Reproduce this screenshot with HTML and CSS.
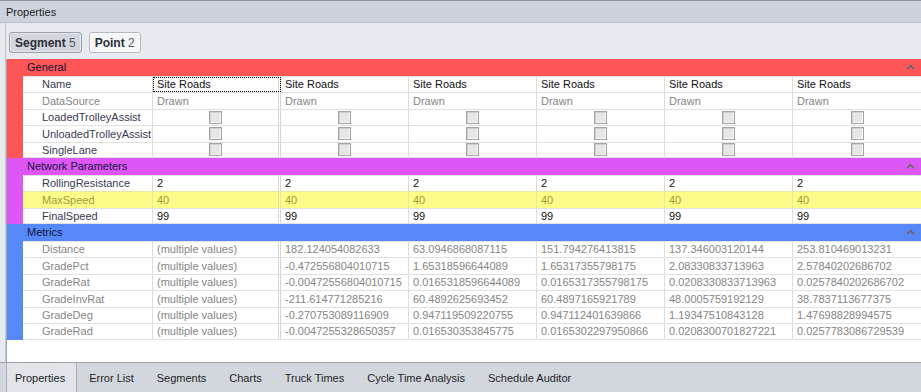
FILE: index.html
```html
<!DOCTYPE html>
<html lang="en">
<head>
    <meta charset="UTF-8">
    <title>Properties</title>
    <link rel="stylesheet" href="styles.css">
</head>
<body>
<div class="title-bar">Properties</div>
<div class="content">
    <div class="toolbar">
        <button class="sel-btn active"><b>Segment</b> 5</button>
        <button class="sel-btn"><b>Point</b> 2</button>
    </div>
    <div class="panel">
        <div class="cat cat-general">
            <div class="cat-head"><span>General</span><svg class="caret" width="9" height="6" viewBox="0 0 9 6"><path d="M1 5.2 L4.5 1.6 L8 5.2"/></svg></div>
            <div class="prow">
                <div class="pname">Name</div>
                <div class="pval focus">Site Roads</div>
                <div class="pval">Site Roads</div>
                <div class="pval">Site Roads</div>
                <div class="pval">Site Roads</div>
                <div class="pval">Site Roads</div>
                <div class="pval">Site Roads</div>
            </div>
            <div class="prow muted">
                <div class="pname">DataSource</div>
                <div class="pval">Drawn</div>
                <div class="pval">Drawn</div>
                <div class="pval">Drawn</div>
                <div class="pval">Drawn</div>
                <div class="pval">Drawn</div>
                <div class="pval">Drawn</div>
            </div>
            <div class="prow">
                <div class="pname">LoadedTrolleyAssist</div>
                <div class="pval check"><span class="box"></span></div>
                <div class="pval check"><span class="box"></span></div>
                <div class="pval check"><span class="box"></span></div>
                <div class="pval check"><span class="box"></span></div>
                <div class="pval check"><span class="box"></span></div>
                <div class="pval check"><span class="box"></span></div>
            </div>
            <div class="prow">
                <div class="pname">UnloadedTrolleyAssist</div>
                <div class="pval check"><span class="box"></span></div>
                <div class="pval check"><span class="box"></span></div>
                <div class="pval check"><span class="box"></span></div>
                <div class="pval check"><span class="box"></span></div>
                <div class="pval check"><span class="box"></span></div>
                <div class="pval check"><span class="box"></span></div>
            </div>
            <div class="prow">
                <div class="pname">SingleLane</div>
                <div class="pval check"><span class="box"></span></div>
                <div class="pval check"><span class="box"></span></div>
                <div class="pval check"><span class="box"></span></div>
                <div class="pval check"><span class="box"></span></div>
                <div class="pval check"><span class="box"></span></div>
                <div class="pval check"><span class="box"></span></div>
            </div>
        </div>

        <div class="cat cat-network">
            <div class="cat-head"><span>Network Parameters</span><svg class="caret" width="9" height="6" viewBox="0 0 9 6"><path d="M1 5.2 L4.5 1.6 L8 5.2"/></svg></div>
            <div class="prow">
                <div class="pname">RollingResistance</div>
                <div class="pval">2</div>
                <div class="pval">2</div>
                <div class="pval">2</div>
                <div class="pval">2</div>
                <div class="pval">2</div>
                <div class="pval">2</div>
            </div>
            <div class="prow highlight">
                <div class="pname">MaxSpeed</div>
                <div class="pval">40</div>
                <div class="pval">40</div>
                <div class="pval">40</div>
                <div class="pval">40</div>
                <div class="pval">40</div>
                <div class="pval">40</div>
            </div>
            <div class="prow">
                <div class="pname">FinalSpeed</div>
                <div class="pval">99</div>
                <div class="pval">99</div>
                <div class="pval">99</div>
                <div class="pval">99</div>
                <div class="pval">99</div>
                <div class="pval">99</div>
            </div>
        </div>

        <div class="cat cat-metrics">
            <div class="cat-head"><span>Metrics</span><svg class="caret" width="9" height="6" viewBox="0 0 9 6"><path d="M1 5.2 L4.5 1.6 L8 5.2"/></svg></div>
            <div class="prow muted">
                <div class="pname">Distance</div>
                <div class="pval">(multiple values)</div>
                <div class="pval">182.124054082633</div>
                <div class="pval">63.0946868087115</div>
                <div class="pval">151.794276413815</div>
                <div class="pval">137.346003120144</div>
                <div class="pval">253.810469013231</div>
            </div>
            <div class="prow muted">
                <div class="pname">GradePct</div>
                <div class="pval">(multiple values)</div>
                <div class="pval">-0.472556804010715</div>
                <div class="pval">1.65318596644089</div>
                <div class="pval">1.65317355798175</div>
                <div class="pval">2.08330833713963</div>
                <div class="pval">2.57840202686702</div>
            </div>
            <div class="prow muted">
                <div class="pname">GradeRat</div>
                <div class="pval">(multiple values)</div>
                <div class="pval">-0.00472556804010715</div>
                <div class="pval">0.0165318596644089</div>
                <div class="pval">0.0165317355798175</div>
                <div class="pval">0.0208330833713963</div>
                <div class="pval">0.0257840202686702</div>
            </div>
            <div class="prow muted">
                <div class="pname">GradeInvRat</div>
                <div class="pval">(multiple values)</div>
                <div class="pval">-211.614771285216</div>
                <div class="pval">60.4892625693452</div>
                <div class="pval">60.4897165921789</div>
                <div class="pval">48.0005759192129</div>
                <div class="pval">38.7837113677375</div>
            </div>
            <div class="prow muted">
                <div class="pname">GradeDeg</div>
                <div class="pval">(multiple values)</div>
                <div class="pval">-0.270753089116909</div>
                <div class="pval">0.947119509220755</div>
                <div class="pval">0.947112401639866</div>
                <div class="pval">1.19347510843128</div>
                <div class="pval">1.47698828994575</div>
            </div>
            <div class="prow muted">
                <div class="pname">GradeRad</div>
                <div class="pval">(multiple values)</div>
                <div class="pval">-0.0047255328650357</div>
                <div class="pval">0.016530353845775</div>
                <div class="pval">0.0165302297950866</div>
                <div class="pval">0.0208300701827221</div>
                <div class="pval">0.0257783086729539</div>
            </div>
        </div>
    </div>
</div>
<div class="tabs">
    <div class="tab active">Properties</div>
    <div class="tab">Error List</div>
    <div class="tab">Segments</div>
    <div class="tab">Charts</div>
    <div class="tab">Truck Times</div>
    <div class="tab">Cycle Time Analysis</div>
    <div class="tab">Schedule Auditor</div>
</div>
</body>
</html>
```

FILE: styles.css
```css
html, body {
    margin: 0;
    padding: 0;
}

body {
    width: 921px;
    height: 392px;
    overflow: hidden;

    font-family: "Liberation Sans", Arial, sans-serif;
    font-size: 11px;
    color: #1b1b1b;

    background-color: #e7eaef;
}

.title-bar {
    height: 21px;
    padding-left: 6px;

    line-height: 22px;

    border-top: 1px solid #8e939b;
    border-bottom: 1px solid #b9bfc7;
    background-color: #cdd3dc;
}

.content {
    margin-left: 5px;

    border-left: 1px solid #c2c7ce;
}

.toolbar {
    display: flex;
    gap: 7px;

    height: 36px;
    padding: 9px 0 0 3px;
    box-sizing: border-box;
}

.sel-btn {
    height: 21px;
    padding: 0 5px 0 5px;

    font-family: inherit;
    font-size: 12px;
    color: #555a63;

    border: 1px solid #b3b8bf;
    border-radius: 3px;
    background-color: #f5f6f8;
    box-shadow: inset 0 0 0 1px #ffffff;
}

.sel-btn b {
    color: #2b303a;
}

.sel-btn.active {
    border-color: #9ca2aa;
    background-color: #d3d7dd;
    box-shadow: inset 0 0 0 1px #e4e7eb;
}

.panel {
    height: 303px;
    box-sizing: border-box;

    border-left: 1px solid #a2a7af;
    background-color: #ffffff;
}

/* categories */

.cat-general {
    background-color: #fe5656;
}

.cat-network {
    background-color: #df56f7;
}

.cat-metrics {
    background-color: #5688f8;
}

.cat-head {
    display: flex;
    align-items: center;
    justify-content: space-between;

    height: 16.5px;
    padding: 0 6px 0 20px;

    color: #14143a;
}

.caret path {
    fill: none;
    stroke: #6a6a6a;
    stroke-width: 1.8;
}

.prow {
    display: grid;
    grid-template-columns: 130px repeat(6, 128px);

    height: 16.5px;
    margin-left: 16px;
    box-sizing: border-box;

    border-top: 1px solid #e1e1e1;
    background-color: #ffffff;
}

.prow:last-child {
    border-bottom: 1px solid #e1e1e1;
}

.prow > div {
    display: flex;
    align-items: center;

    overflow: hidden;
    white-space: nowrap;

    border-right: 1px solid #dddddd;
}

.prow > div:last-child {
    border-right: none;
}

.pname {
    padding-left: 19px;

    color: #3a3b50;
}

.pval {
    padding-left: 4px;

    color: #111111;
}

.prow .pname + .pval {
    border-right: 3px double #d6d6d6;
}

.pval.focus {
    outline: 1px dotted #000000;
    outline-offset: -1px;
}

.pval.check {
    justify-content: center;
    padding-left: 0;
}

.box {
    width: 11px;
    height: 11px;

    border: 1px solid #a4a4a4;
    background-color: #e6e6e6;
    box-shadow: inset 1px 1px 0 #d0d0d0, inset -1px -1px 0 #f6f6f6;
}

.prow.muted .pname,
.prow.muted .pval {
    color: #858585;
}

.prow.highlight {
    border-top-color: #e8e8a0;
    background-color: #fcfc8a;
}

.prow.highlight > div {
    color: #9c9c3a;
    border-right-color: #e8e8a0;
}

.prow.highlight .pname + .pval {
    border-right-color: #e4e4a0;
}

/* bottom tabs */

.tabs {
    display: flex;

    height: 29px;
    padding-left: 6px;

    border-top: 1px solid #9da2aa;
    background-color: #d2d7de;
}

.tab {
    padding: 2px 11px 0 12px;

    line-height: 27px;
    color: #1e1e1e;
}

.tab.active {
    padding: 2px 11px 0 8px;

    border-left: 1px solid #a8adb5;
    border-right: 1px solid #a8adb5;
    background-color: #e1e5ea;
}
```
